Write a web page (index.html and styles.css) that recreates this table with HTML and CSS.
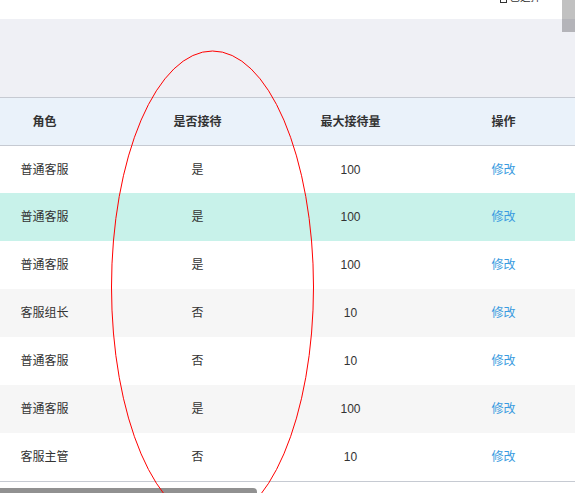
FILE: index.html
```html
<!DOCTYPE html>
<html lang="zh-CN">
<head>
<meta charset="utf-8">
<title>客服列表</title>
<link rel="stylesheet" href="styles.css">
</head>
<body>
<div class="page">
  <div class="topbar">
    <div class="top-action"><span class="top-icon"></span>已选择</div>
  </div>
  <div class="filter-area"></div>
  <div class="table-wrap">
    <div class="table">
      <div class="row head">
        <div class="cell">角色</div>
        <div class="cell">是否接待</div>
        <div class="cell">最大接待量</div>
        <div class="cell">操作</div>
      </div>
      <div class="row first">
        <div class="cell">普通客服</div><div class="cell">是</div><div class="cell">100</div><div class="cell"><a class="link">修改</a></div>
      </div>
      <div class="row hover">
        <div class="cell">普通客服</div><div class="cell">是</div><div class="cell">100</div><div class="cell"><a class="link">修改</a></div>
      </div>
      <div class="row">
        <div class="cell">普通客服</div><div class="cell">是</div><div class="cell">100</div><div class="cell"><a class="link">修改</a></div>
      </div>
      <div class="row striped">
        <div class="cell">客服组长</div><div class="cell">否</div><div class="cell">10</div><div class="cell"><a class="link">修改</a></div>
      </div>
      <div class="row">
        <div class="cell">普通客服</div><div class="cell">否</div><div class="cell">10</div><div class="cell"><a class="link">修改</a></div>
      </div>
      <div class="row striped">
        <div class="cell">普通客服</div><div class="cell">是</div><div class="cell">100</div><div class="cell"><a class="link">修改</a></div>
      </div>
      <div class="row last">
        <div class="cell">客服主管</div><div class="cell">否</div><div class="cell">10</div><div class="cell"><a class="link">修改</a></div>
      </div>
    </div>
  </div>
  <div class="hscroll"><div class="hthumb"></div></div>
  <div class="vscroll"><div class="vthumb-top"></div><div class="vthumb-bottom"></div></div>
  <svg class="annotation" width="575" height="493" viewBox="0 0 575 493">
    <ellipse cx="212.5" cy="287" rx="101" ry="236" fill="none" stroke="#ff0000" stroke-width="1"/>
  </svg>
</div>
</body>
</html>
```

FILE: styles.css
```css
html, body {
  margin: 0;
  padding: 0;
  background: #ffffff;
}

body {
  font-family: "Liberation Sans", "Noto Sans CJK SC", sans-serif;
  font-size: 12px;
  color: #333333;
  overflow: hidden;
  width: 575px;
  height: 493px;
}

.page {
  position: relative;
  width: 575px;
  height: 493px;
  overflow: hidden;
}

.topbar {
  height: 19px;
  background: #ffffff;
  overflow: hidden;
}

.top-action {
  display: flex;
  justify-content: flex-end;
  align-items: flex-end;
  gap: 3px;
  margin-top: -10px;
  padding-right: 34px;
  height: 14px;
  font-size: 10.5px;
  line-height: 14px;
  color: #333333;
}

.top-icon {
  width: 7px;
  height: 10px;
  margin-bottom: 1px;
  border: 1px solid #333333;
  box-sizing: border-box;
}

.filter-area {
  height: 78px;
  background: #eff0f5;
  border-bottom: 1px solid #c6cad2;
}

.table-wrap {
  overflow: hidden;
  width: 575px;
}

.table {
  margin-left: -32px;
  width: 612px;
}

.row {
  display: grid;
  grid-template-columns: repeat(4, 153px);
  height: 48px;
  align-items: center;
  background: #ffffff;
}

.row.head {
  height: 47px;
  background: #eaf2fa;
  border-bottom: 1px solid #c6cad2;
  font-weight: bold;
  color: #333333;
}

.row.first {
  height: 47px;
}

.row.hover {
  background: #c8f2ea;
}

.row.striped {
  background: #f6f6f6;
}

.row.last {
  border-bottom: 1px solid #c6cad2;
}

.cell {
  text-align: center;
  line-height: 16px;
}

.link {
  color: #3a9be0;
  text-decoration: none;
}

.hscroll {
  margin-top: 6px;
  height: 6px;
}

.hthumb {
  width: 257px;
  height: 6px;
  background: #919191;
  border-top-right-radius: 4px;
}

.vscroll {
  position: absolute;
  top: 0;
  right: 0;
  width: 13px;
  height: 32px;
  display: flex;
  flex-direction: column;
}

.vthumb-top {
  height: 19px;
  background: #c1c1c1;
}

.vthumb-bottom {
  height: 13px;
  background: #b4b4b9;
}

.annotation {
  position: absolute;
  top: 0;
  left: 0;
  pointer-events: none;
}
```
